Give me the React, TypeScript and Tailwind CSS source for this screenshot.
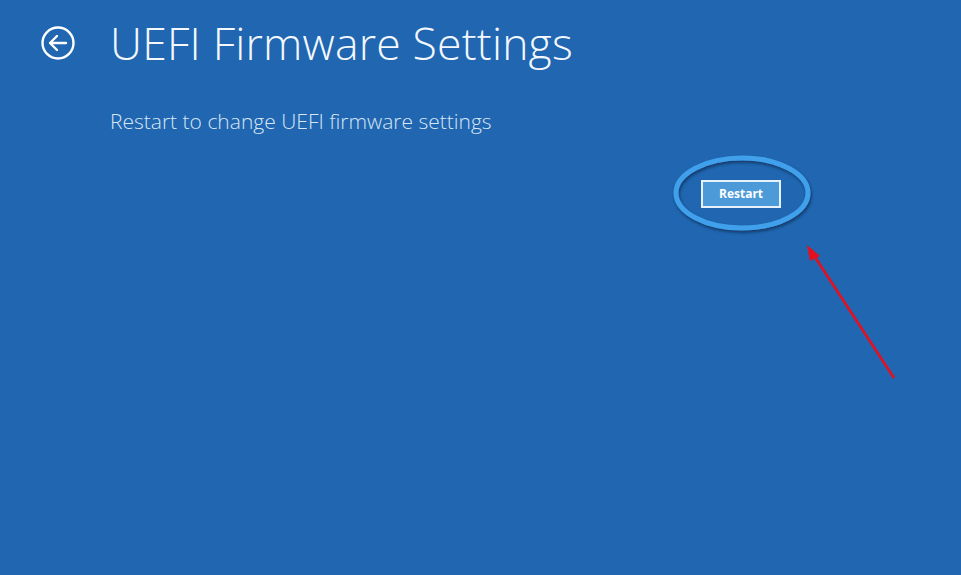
import React from "react";

export default function App() {
  return (
    <div
      className="relative w-[961px] h-[575px] overflow-hidden bg-[#2066b0] text-white"
      style={{ fontFamily: '"Open Sans", "Noto Sans", sans-serif' }}
    >
      <div className="flex items-center pl-[40px] pt-[15px] gap-[34px]">
        <svg width="36" height="36" viewBox="0 0 36 36" fill="none" stroke="white" strokeWidth="2.4">
          <circle cx="18" cy="18" r="15.5" />
          <path d="M10 18 H26 M17 11 L10 18 L17 25" strokeLinecap="round" strokeLinejoin="round" />
        </svg>
        <h1 className="text-[44.5px] font-light leading-[56px] tracking-[0.2px] text-[#f4f8fd]">
          UEFI Firmware Settings
        </h1>
      </div>

      <p className="ml-[110px] mt-[36px] text-[21px] leading-[28px] font-light text-[#d7e5f5]">
        Restart to change UEFI firmware settings
      </p>

      <div className="flex justify-end pr-[180px] mt-[45px]">
        <button className="w-[80px] h-[28px] border-2 border-[#e6f1fb] bg-[#4d9ad8] text-[12px] font-bold text-white">
          Restart
        </button>
      </div>

      {/* highlight ring and pointer arrow drawn over the page */}
      <svg className="absolute left-0 top-0 pointer-events-none" width="961" height="575">
        <defs>
          <filter id="ringShadow" x="-20%" y="-40%" width="140%" height="180%">
            <feDropShadow dx="1" dy="2" stdDeviation="1.5" floodColor="#0a2a55" floodOpacity="0.8" />
          </filter>
        </defs>
        <ellipse
          cx="742"
          cy="193"
          rx="66"
          ry="35"
          fill="none"
          stroke="#3fa0ec"
          strokeWidth="5"
          filter="url(#ringShadow)"
        />
        <line x1="894" y1="378" x2="813" y2="254" stroke="#e5101f" strokeWidth="2.6" />
        <polygon points="807,245 820,256 810,261" fill="#e5101f" />
      </svg>
    </div>
  );
}
